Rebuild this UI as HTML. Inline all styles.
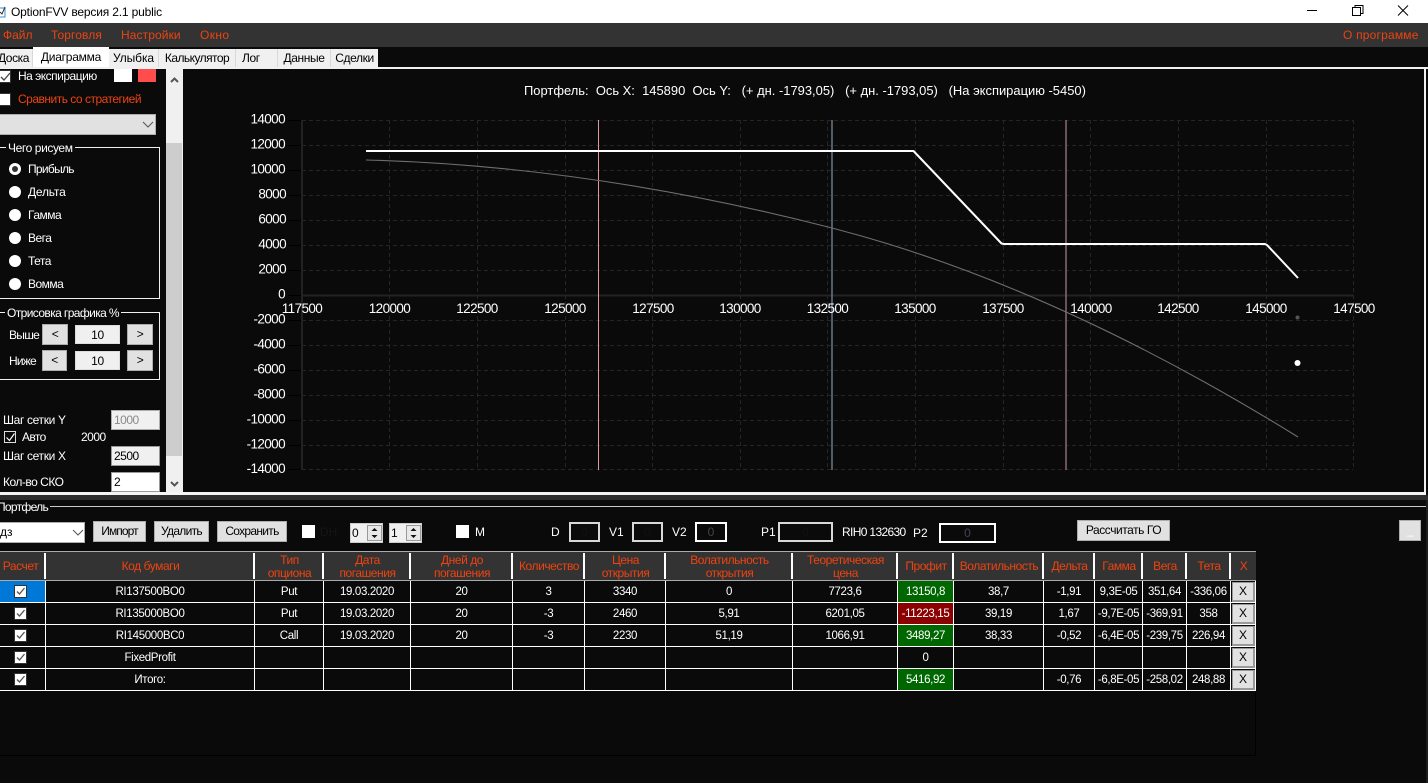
<!DOCTYPE html>
<html lang="ru"><head><meta charset="utf-8"><title>OptionFVV</title>
<style>
html,body{margin:0;padding:0;width:1428px;height:783px;overflow:hidden;background:#0a0a0a}
body{position:relative;font:12px/14px "Liberation Sans",sans-serif;color:#fff}
.a,.t,.c,.b,.i,.cb{position:absolute;box-sizing:border-box}
.t{white-space:nowrap}
.r{color:#ee4311}
.k{color:#000}
.b{background:#e1e1e1;border:1px solid #adadad;color:#000;text-align:center;white-space:nowrap;letter-spacing:-.6px}
.tab{position:absolute;box-sizing:border-box;top:49px;height:18px;background:#f0f0f0;color:#000;text-align:center;line-height:18px;white-space:nowrap;border-right:1px solid #d9d9d9;letter-spacing:-.4px}
.i{background:#0a0a0a;border:2px solid #e0e0e0;text-align:center;color:#111;line-height:16px}
.cb{width:13px;height:13px;background:#fff;border:1px solid #333}
.cb svg{position:absolute;left:0;top:0}
.rd{position:absolute;left:9px;width:12px;height:12px;border-radius:50%;background:#fff}
.lb{position:absolute;left:28px;white-space:nowrap;letter-spacing:-.5px}
.g{position:absolute;box-sizing:border-box;border:1px solid #f0f0f0}
.lg{position:absolute;background:#0a0a0a;padding:0 2px;white-space:nowrap}
table{position:absolute;left:0;top:551px;width:1256px;border-collapse:separate;border-spacing:0;table-layout:fixed;font:11.5px/13px "Liberation Sans",sans-serif;letter-spacing:-.35px}
th{position:relative;height:30px;box-sizing:border-box;background:#333;color:#ee4311;font-weight:400;font-size:12px;border-top:1px solid #aaa;border-bottom:1px solid #aaa;padding:1px 0 0;text-align:center;letter-spacing:-.45px}
th:after{content:"";position:absolute;right:0;top:1px;bottom:1px;width:2px;background:#fff}
th.l:after{display:none}
td{height:22px;box-sizing:border-box;border-right:1px solid #fff;border-bottom:1px solid #fff;padding:1px 0 0;text-align:center;white-space:nowrap;position:relative;color:#fff}
td .cb{left:14px;top:4px}
.gr{background:#006600}.rdd{background:#8b0000}
.x{position:absolute;left:1px;top:1px;width:23px;height:20px;background:#e1e1e1;border:1px solid #999;border-width:1px 2px 2px 1px;box-sizing:border-box;color:#000;line-height:17px;letter-spacing:0;font-size:12px}
</style></head><body>

<!-- title bar -->
<div class="a" style="left:0;top:0;width:1428px;height:23px;background:#fff"></div>
<svg class="a" style="left:0;top:6px" width="8" height="13"><path d="M-3 2h8v9h-8" fill="#fff" stroke="#3a8fc8"/><path d="M0 6l2 2 3-7" fill="none" stroke="#333"/></svg>
<div class="t k" style="left:11px;top:5px;letter-spacing:-.17px">OptionFVV версия 2.1 public</div>
<svg class="a" style="left:1300px;top:0" width="120" height="23" fill="none" stroke="#000"><path d="M7 10.500h10"/><path d="M52.500 7.500h8v8h-8z"/><path d="M55 7V5.500h8v8h-2"/><path d="M98 5.500l10 10M108 5.500l-10 10"/></svg>

<!-- menu -->
<div class="a" style="left:0;top:23px;width:1428px;height:24px;background:#333"></div>
<div class="t r" style="left:3px;top:28px">Файл</div>
<div class="t r" style="left:51px;top:28px;letter-spacing:.1px">Торговля</div>
<div class="t r" style="left:121px;top:28px;letter-spacing:.1px">Настройки</div>
<div class="t r" style="left:200px;top:28px;letter-spacing:.4px">Окно</div>
<div class="t r" style="left:1343px;top:28px;letter-spacing:.2px">О программе</div>

<!-- tabs -->
<div class="a" style="left:0;top:47px;width:1428px;height:20px;background:#0a0a0a"></div>
<div class="tab" style="left:-5px;width:38px">Доска</div>
<div class="tab" style="left:33px;top:47px;width:76px;height:21px;background:#fff;border:0;line-height:20px;letter-spacing:-.25px">Диаграмма</div>
<div class="tab" style="left:109px;width:50px;letter-spacing:-.1px">Улыбка</div>
<div class="tab" style="left:159px;width:77px;letter-spacing:-.55px">Калькулятор</div>
<div class="tab" style="left:236px;width:42px;text-align:left;padding-left:6px">Лог</div>
<div class="tab" style="left:278px;width:53px">Данные</div>
<div class="tab" style="left:331px;width:47px;border:0">Сделки</div>
<div class="a" style="left:0;top:67px;width:1428px;height:2px;background:#f0f0f0"></div>

<!-- left panel -->
<div class="cb" style="left:-2px;top:70px"><svg width="13" height="13"><path d="M2 6l3 3 6-7" fill="none" stroke="#444" stroke-width="1.300"/></svg></div>
<div class="t" style="left:18px;top:69px;letter-spacing:-.5px">На экспирацию</div>
<div class="a" style="left:114px;top:69px;width:18px;height:13px;background:#fff"></div>
<div class="a" style="left:138px;top:69px;width:18px;height:13px;background:#ff4d4d"></div>
<div class="cb" style="left:-2px;top:93px"></div>
<div class="t r" style="left:18px;top:92px;letter-spacing:-.5px">Сравнить со стратегией</div>
<div class="a" style="left:-1px;top:114px;width:157px;height:21px;background:#e1e1e1;border:1px solid #adadad"><svg class="a" style="left:142px;top:6px" width="12" height="8"><path d="M1 1l5 5 5-5" fill="none" stroke="#555"/></svg></div>

<div class="g" style="left:-2px;top:147px;width:162px;height:152px"></div>
<div class="lg" style="left:6px;top:141px;letter-spacing:-.4px">Чего рисуем</div>
<div class="rd" style="top:163px"></div><div class="a" style="left:12px;top:166px;width:6px;height:6px;border-radius:50%;background:#333"></div>
<div class="rd" style="top:186px"></div><div class="rd" style="top:209px"></div><div class="rd" style="top:232px"></div><div class="rd" style="top:255px"></div><div class="rd" style="top:278px"></div>
<div class="lb" style="top:162px;letter-spacing:-.7px">Прибыль</div>
<div class="lb" style="top:185px;letter-spacing:-.2px">Дельта</div>
<div class="lb" style="top:208px">Гамма</div>
<div class="lb" style="top:231px">Вега</div>
<div class="lb" style="top:254px">Тета</div>
<div class="lb" style="top:277px">Вомма</div>

<div class="g" style="left:-2px;top:312px;width:162px;height:68px"></div>
<div class="lg" style="left:5px;top:306px;letter-spacing:-.6px">Отрисовка графика %</div>
<div class="t" style="left:9px;top:328px;letter-spacing:-.7px">Выше</div>
<div class="b" style="left:42px;top:324px;width:26px;height:21px;line-height:19px">&lt;</div>
<div class="a k" style="left:75px;top:325px;width:45px;height:19px;background:#f0f0f0;text-align:center;line-height:19px;border:1px solid #ddd;letter-spacing:-.3px">10</div>
<div class="b" style="left:127px;top:324px;width:26px;height:21px;line-height:19px">&gt;</div>
<div class="t" style="left:9px;top:354px;letter-spacing:-.8px">Ниже</div>
<div class="b" style="left:42px;top:350px;width:25px;height:21px;line-height:19px">&lt;</div>
<div class="a k" style="left:75px;top:351px;width:45px;height:19px;background:#f0f0f0;text-align:center;line-height:19px;border:1px solid #ddd;letter-spacing:-.3px">10</div>
<div class="b" style="left:127px;top:350px;width:26px;height:21px;line-height:19px">&gt;</div>

<div class="t" style="left:3px;top:413px;letter-spacing:-.35px">Шаг сетки Y</div>
<div class="a" style="left:111px;top:410px;width:49px;height:20px;background:#f0f0f0;border:1px solid #adadad;color:#8a8a8a;padding-left:2px;line-height:18px;letter-spacing:-.5px">1000</div>
<div class="cb" style="left:4px;top:431px;background:#0a0a0a;border-color:#ddd;width:12px;height:12px"><svg width="11" height="11"><path d="M1.500 5.500l3 3 5-7" fill="none" stroke="#fff" stroke-width="1.200"/></svg></div>
<div class="t" style="left:22px;top:430px;letter-spacing:-.6px">Авто</div>
<div class="t" style="left:81px;top:430px;letter-spacing:-.5px">2000</div>
<div class="t" style="left:3px;top:449px;letter-spacing:-.35px">Шаг сетки X</div>
<div class="a k" style="left:111px;top:446px;width:49px;height:20px;background:#f0f0f0;border:1px solid #999;padding-left:2px;line-height:18px;letter-spacing:-.5px">2500</div>
<div class="t" style="left:3px;top:475px;letter-spacing:-.5px">Кол-во СКО</div>
<div class="a k" style="left:111px;top:472px;width:49px;height:20px;background:#fff;border:1px solid #999;padding-left:2px;line-height:18px">2</div>

<!-- scrollbar -->
<div class="a" style="left:166px;top:69px;width:17px;height:423px;background:#f0f0f0"></div>
<div class="a" style="left:166px;top:143px;width:16px;height:313px;background:#cdcdcd"></div>
<svg class="a" style="left:166px;top:69px" width="17" height="423" fill="none" stroke="#555" stroke-width="2"><path d="M5 13l3.500-3.500 3.500 3.500"/><path d="M5 413l3.500 3.500 3.500-3.500"/></svg>

<!-- chart -->
<svg class="a" style="left:183px;top:69px" width="1242" height="423" viewBox="183 69 1242 423">
<g stroke="#252525" stroke-dasharray="4 3" fill="none">
<path d="M302 120.500H1353M302 145.500H1353M302 170.500H1353M302 195.500H1353M302 220.500H1353M302 245.500H1353M302 270.500H1353M302 320.500H1353M302 345.500H1353M302 370.500H1353M302 395.500H1353M302 420.500H1353M302 445.500H1353M302 469.500H1353"/>
<path d="M389.500 120V470M477.500 120V470M565.500 120V470M652.500 120V470M740.500 120V470M827.500 120V470M915.500 120V470M1003.500 120V470M1090.500 120V470M1178.500 120V470M1266.500 120V470M1353.500 120V470"/>
</g>
<path d="M302 120V470" stroke="#222" stroke-width="2"/>
<path d="M302 295.500H1353" stroke="#232323" stroke-width="2"/>
<path d="M288 120.500h13M288 145.500h13M288 170.500h13M288 195.500h13M288 220.500h13M288 245.500h13M288 270.500h13M288 295.500h13M288 320.500h13M288 345.500h13M288 370.500h13M288 395.500h13M288 420.500h13M288 445.500h13M288 469.500h13" stroke="#000"/>
<path d="M598.500 120V470" stroke="#e09a9f" stroke-width="1"/>
<path d="M832 120V470" stroke="#68788a" stroke-width="1.500"/>
<path d="M1066 120V470" stroke="#8b6a72" stroke-width="1.500"/>
<path d="M366 160C521 164 677 188 832 228C987 268 1143 341 1298 437" fill="none" stroke="#6e6e6e" stroke-width="1.100"/>
<path d="M366 151H913.500L1001.500 243.500L1004 244H1265L1267 245L1298 278" fill="none" stroke="#fff" stroke-width="2" stroke-linejoin="round"/>
<circle cx="1297.500" cy="317.500" r="2" fill="#555"/>
<circle cx="1297.500" cy="363" r="3" fill="#fff"/>
<g fill="#fff" font-family="Liberation Sans" font-size="13.500" letter-spacing="-.6" text-anchor="end">
<text x="285" y="123.500">14000</text><text x="285" y="148.500">12000</text><text x="285" y="173.500">10000</text>
<text x="286" y="198.500">8000</text><text x="286" y="223.500">6000</text><text x="286" y="248.500">4000</text><text x="286" y="273.500">2000</text>
<text x="285" y="298.500">0</text>
<text x="285" y="323.500">-2000</text><text x="285" y="348.500">-4000</text><text x="285" y="373.500">-6000</text><text x="285" y="398.500">-8000</text>
<text x="285" y="423.500">-10000</text><text x="285" y="448.500">-12000</text><text x="285" y="473">-14000</text>
</g>
<g fill="#fff" font-family="Liberation Sans" font-size="13.500" letter-spacing="-.6" text-anchor="middle">
<text x="302" y="313">117500</text><text x="389.500" y="313">120000</text><text x="477" y="313">122500</text><text x="565" y="313">125000</text><text x="653" y="313">127500</text><text x="740" y="313">130000</text><text x="827.500" y="313">132500</text><text x="915" y="313">135000</text><text x="1003" y="313">137500</text><text x="1091" y="313">140000</text><text x="1178" y="313">142500</text><text x="1266" y="313">145000</text><text x="1354" y="313">147500</text>
</g>
<text x="524" y="95" fill="#fff" font-family="Liberation Sans" font-size="12.950" xml:space="preserve">Портфель:  Ось X:  145890  Ось Y:   (+ дн. -1793,05)   (+ дн. -1793,05)   (На экспирацию -5450)</text>
</svg>
<div class="a" style="left:1424px;top:67px;width:2px;height:428px;background:#f0f0f0"></div>
<div class="a" style="left:0;top:492px;width:1426px;height:3px;background:#f4f4f4"></div>
<div class="a" style="left:0;top:495px;width:1428px;height:5px;background:#2e2e2e"></div>

<!-- portfolio toolbar -->
<div class="a" style="left:0;top:506px;width:1428px;height:1px;background:#c8c8c8"></div>
<div class="lg" style="left:-5px;top:500px;letter-spacing:-.7px">Портфель</div>
<div class="a k" style="left:-1px;top:522px;width:86px;height:21px;background:#fff;border:1px solid #adadad;line-height:19px;padding-left:0">дз<svg class="a" style="left:72px;top:6px" width="12" height="8"><path d="M1 1l5 5 5-5" fill="none" stroke="#555"/></svg></div>
<div class="b" style="left:93px;top:521px;width:53px;height:21px;line-height:19px;letter-spacing:-.9px">Импорт</div>
<div class="b" style="left:154px;top:521px;width:55px;height:21px;line-height:19px;letter-spacing:-.7px">Удалить</div>
<div class="b" style="left:217px;top:521px;width:70px;height:21px;line-height:19px;letter-spacing:-.7px">Сохранить</div>
<div class="a" style="left:302px;top:525px;width:13px;height:13px;background:#fff"></div>
<div class="t" style="left:320px;top:525px;color:#151515">DH</div>
<div class="a k" style="left:350px;top:523px;width:33px;height:20px;background:#f0f0f0;border:1px solid #ccc;padding-left:1px;line-height:18px">0</div>
<div class="a" style="left:367px;top:525px;width:15px;height:16px;background:#e8e8e8;border:1px solid #999"><svg width="13" height="14"><path d="M3.500 5l3-3 3 3zM3.500 9l3 3 3-3z" fill="#111"/></svg></div>
<div class="a k" style="left:389px;top:523px;width:33px;height:20px;background:#f0f0f0;border:1px solid #ccc;padding-left:1px;line-height:18px">1</div>
<div class="a" style="left:406px;top:525px;width:15px;height:16px;background:#e8e8e8;border:1px solid #999"><svg width="13" height="14"><path d="M3.500 5l3-3 3 3zM3.500 9l3 3 3-3z" fill="#111"/></svg></div>
<div class="a" style="left:456px;top:525px;width:13px;height:13px;background:#fff"></div>
<div class="t" style="left:475px;top:525px">M</div>
<div class="t" style="left:551px;top:525px">D</div>
<div class="i" style="left:569px;top:522px;width:31px;height:20px;border-color:#d8d8d8">0</div>
<div class="t" style="left:609px;top:525px">V1</div>
<div class="i" style="left:632px;top:522px;width:31px;height:20px;border-color:#d8d8d8">0</div>
<div class="t" style="left:672px;top:525px">V2</div>
<div class="i" style="left:695px;top:522px;width:32px;height:20px;border-color:#fff;color:#444">0</div>
<div class="t" style="left:761px;top:525px">P1</div>
<div class="i" style="left:778px;top:522px;width:55px;height:20px;border-color:#d8d8d8">0</div>
<div class="t" style="left:842px;top:525px;letter-spacing:-.65px">RIH0 132630</div>
<div class="t" style="left:913px;top:526px">P2</div>
<div class="i" style="left:939px;top:523px;width:57px;height:20px;border-color:#fff;color:#445">0</div>
<div class="b" style="left:1077px;top:520px;width:93px;height:21px;line-height:19px;letter-spacing:-.45px">Рассчитать ГО</div>
<div class="b" style="left:1399px;top:520px;width:22px;height:21px;line-height:19px;color:#fff">_</div>

<!-- table area -->
<div class="a" style="left:-1px;top:551px;width:1257px;height:205px;border:1px solid #000;background:#0a0a0a"></div>
<table>
<colgroup><col style="width:46px"><col style="width:209px"><col style="width:69px"><col style="width:87px"><col style="width:102px"><col style="width:72px"><col style="width:81px"><col style="width:127px"><col style="width:105px"><col style="width:56px"><col style="width:90px"><col style="width:51px"><col style="width:48px"><col style="width:44px"><col style="width:44px"><col style="width:25px"></colgroup>
<tr><th style="padding-right:5px">Расчет</th><th>Код бумаги</th><th>Тип<br>опциона</th><th>Дата<br>погашения</th><th>Дней до<br>погашения</th><th>Количество</th><th>Цена<br>открытия</th><th>Волатильность<br>открытия</th><th>Теоретическая<br>цена</th><th>Профит</th><th>Волатильность</th><th>Дельта</th><th>Гамма</th><th>Вега</th><th>Тета</th><th class="l">X</th></tr>
<tr><td style="background:#0078d7"><div class="cb"><svg width="11" height="11"><path d="M2 5.500l2.500 2.500 5-6" fill="none" stroke="#555" stroke-width="1.300"/></svg></div></td><td>RI137500BO0</td><td>Put</td><td>19.03.2020</td><td>20</td><td>3</td><td>3340</td><td>0</td><td>7723,6</td><td class="gr">13150,8</td><td>38,7</td><td>-1,91</td><td>9,3E-05</td><td>351,64</td><td>-336,06</td><td><div class="x">X</div></td></tr>
<tr><td><div class="cb"><svg width="11" height="11"><path d="M2 5.500l2.500 2.500 5-6" fill="none" stroke="#555" stroke-width="1.300"/></svg></div></td><td>RI135000BO0</td><td>Put</td><td>19.03.2020</td><td>20</td><td>-3</td><td>2460</td><td>5,91</td><td>6201,05</td><td class="rdd">-11223,15</td><td>39,19</td><td>1,67</td><td>-9,7E-05</td><td>-369,91</td><td>358</td><td><div class="x">X</div></td></tr>
<tr><td><div class="cb"><svg width="11" height="11"><path d="M2 5.500l2.500 2.500 5-6" fill="none" stroke="#555" stroke-width="1.300"/></svg></div></td><td>RI145000BC0</td><td>Call</td><td>19.03.2020</td><td>20</td><td>-3</td><td>2230</td><td>51,19</td><td>1066,91</td><td class="gr">3489,27</td><td>38,33</td><td>-0,52</td><td>-6,4E-05</td><td>-239,75</td><td>226,94</td><td><div class="x">X</div></td></tr>
<tr><td><div class="cb"><svg width="11" height="11"><path d="M2 5.500l2.500 2.500 5-6" fill="none" stroke="#555" stroke-width="1.300"/></svg></div></td><td>FixedProfit</td><td></td><td></td><td></td><td></td><td></td><td></td><td></td><td>0</td><td></td><td></td><td></td><td></td><td></td><td><div class="x">X</div></td></tr>
<tr><td><div class="cb"><svg width="11" height="11"><path d="M2 5.500l2.500 2.500 5-6" fill="none" stroke="#555" stroke-width="1.300"/></svg></div></td><td>Итого:</td><td></td><td></td><td></td><td></td><td></td><td></td><td></td><td class="gr">5416,92</td><td></td><td>-0,76</td><td>-6,8E-05</td><td>-258,02</td><td>248,88</td><td><div class="x">X</div></td></tr>
</table>
<div class="a" style="left:1426px;top:500px;width:2px;height:283px;background:#1c1c1c"></div>
</body></html>
